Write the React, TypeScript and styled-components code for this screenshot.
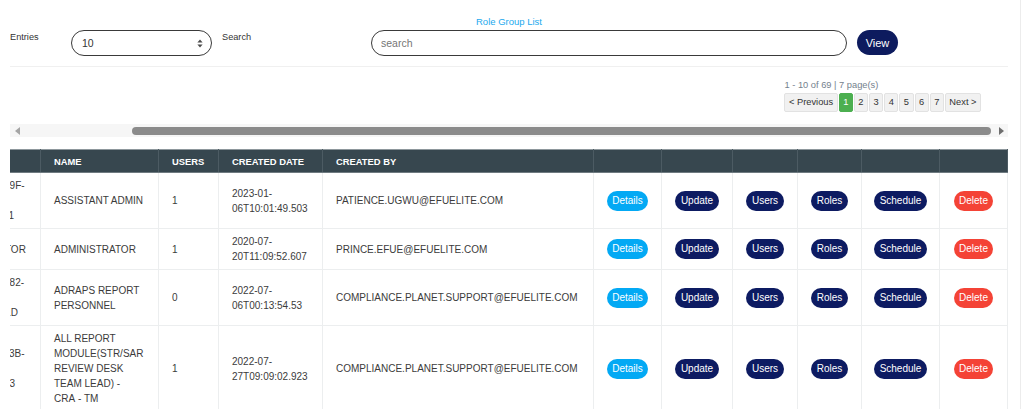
import { useLayoutEffect, useRef, useState } from "react";
import styled, { createGlobalStyle, css } from "styled-components";

type Tone = "info" | "primary" | "danger";

const groups = [
  {
    sn: 1,
    id: "4D7A2C1E-B29F-C4E1-A7D3-E8452B6A3901",
    name: "ASSISTANT ADMIN",
    users: 1,
    created: "2023-01-06T10:01:49.503",
    by: "PATIENCE.UGWU@EFUELITE.COM",
  },
  {
    sn: 2,
    id: "ADMINISTRATOR",
    name: "ADMINISTRATOR",
    users: 1,
    created: "2020-07-20T11:09:52.607",
    by: "PRINCE.EFUE@EFUELITE.COM",
  },
  {
    sn: 3,
    id: "A3C9E5B7-D482-F1A6-E3B8-C7D2A9845E1D",
    name: "ADRAPS REPORT PERSONNEL",
    users: 0,
    created: "2022-07-06T00:13:54.53",
    by: "COMPLIANCE.PLANET.SUPPORT@EFUELITE.COM",
  },
  {
    sn: 4,
    id: "E6F1A2C4-C73B-D9E0-A5F2-B1C8045E6F73",
    name: "ALL REPORT MODULE(STR/SAR REVIEW DESK TEAM LEAD) - CRA\u00a0-\u00a0TM",
    users: 1,
    created: "2022-07-27T09:09:02.923",
    by: "COMPLIANCE.PLANET.SUPPORT@EFUELITE.COM",
  },
];

const actions: { label: string; tone: Tone }[] = [
  { label: "Details", tone: "info" },
  { label: "Update", tone: "primary" },
  { label: "Users", tone: "primary" },
  { label: "Roles", tone: "primary" },
  { label: "Schedule", tone: "primary" },
  { label: "Delete", tone: "danger" },
];

const colWidths = [46, 110, 118, 60, 104, 271, 68, 71, 65, 64, 78, 68];

const App = () => {
  const wrapRef = useRef<HTMLDivElement>(null);
  const [bar, setBar] = useState({ left: 0, width: 100 });

  useLayoutEffect(() => {
    const el = wrapRef.current;
    if (!el) return;
    const max = el.scrollWidth - el.clientWidth;
    el.scrollLeft = max;
    setBar({
      left: (max / el.scrollWidth) * 100,
      width: (el.clientWidth / el.scrollWidth) * 100,
    });
  }, []);

  return (
    <Page>
      <GlobalStyle />
      <Title>Role Group List</Title>
      <FormRow>
        <FieldLabel $width={61}>Entries</FieldLabel>
        <SelectBox>
          <Select defaultValue="10">
            <option>10</option>
            <option>25</option>
            <option>50</option>
          </Select>
          <SelectIcon width="6" height="9" viewBox="0 0 6 9">
            <path d="M3 0.5L5.6 3.6H0.4Z" fill="#4a4a4a" />
            <path d="M3 8.5L5.6 5.4H0.4Z" fill="#4a4a4a" />
          </SelectIcon>
        </SelectBox>
        <FieldLabel $width={149} $gap={10}>
          Search
        </FieldLabel>
        <SearchInput placeholder="search" />
        <ViewButton>View</ViewButton>
      </FormRow>
      <Divider />

      <Pager>
        <PagerInfo>1 - 10 of 69 | 7 page(s)</PagerInfo>
        <PagerButtons>
          <PageButton>&lt; Previous</PageButton>
          {[1, 2, 3, 4, 5, 6, 7].map((n) => (
            <PageButton key={n} $active={n === 1}>
              {n}
            </PageButton>
          ))}
          <PageButton>Next &gt;</PageButton>
        </PagerButtons>
      </Pager>

      <ScrollBar>
        <ScrollArrow $dir="left" $color="#a5a5a5" />
        <ThumbTrack>
          <Thumb style={{ marginLeft: `${bar.left}%`, width: `${bar.width}%` }} />
        </ThumbTrack>
        <ScrollArrow $dir="right" $color="#6e6e6e" />
      </ScrollBar>

      <TableWrap ref={wrapRef}>
        <Table>
          <colgroup>
            {colWidths.map((w, i) => (
              <col key={i} style={{ width: w }} />
            ))}
          </colgroup>
          <thead>
            <tr>
              <Th>#</Th>
              <Th>ID</Th>
              <Th>NAME</Th>
              <Th>USERS</Th>
              <Th>CREATED DATE</Th>
              <Th>CREATED BY</Th>
              {actions.map((a) => (
                <Th key={a.label} />
              ))}
            </tr>
          </thead>
          <tbody>
            {groups.map((g) => (
              <tr key={g.sn}>
                <Td>{g.sn}</Td>
                <Td>{g.id}</Td>
                <Td>{g.name}</Td>
                <Td>{g.users}</Td>
                <Td>{g.created}</Td>
                <Td>{g.by}</Td>
                {actions.map((a) => (
                  <ActionTd key={a.label}>
                    <ActionButton $tone={a.tone}>{a.label}</ActionButton>
                  </ActionTd>
                ))}
              </tr>
            ))}
          </tbody>
        </Table>
      </TableWrap>
    </Page>
  );
};

export default App;

// styles
const GlobalStyle = createGlobalStyle`
  html, body {
    margin: 0;
    padding: 0;
    overflow: hidden;
    background: #fff;
  }
  body {
    font-family: "Liberation Sans", Arial, sans-serif;
    color: #333;
  }
  * {
    box-sizing: border-box;
  }
`;

const Page = styled.div`
  width: 1021px;
  min-height: 100vh;
  padding: 14px 12px 0 10px;
  border-right: 1px solid #ececec;
  display: flex;
  flex-direction: column;
`;

const Title = styled.div`
  text-align: center;
  font-size: 9.5px;
  line-height: 16px;
  color: #22a9ee;
`;

const FormRow = styled.div`
  display: flex;
  align-items: flex-start;
  height: 26px;
`;

const FieldLabel = styled.label<{ $width: number; $gap?: number }>`
  width: ${(p) => p.$width}px;
  margin-left: ${(p) => p.$gap ?? 0}px;
  padding-top: 1px;
  font-size: 9.2px;
  line-height: 12px;
  color: #333;
`;

const SelectBox = styled.div`
  position: relative;
  width: 141px;
  height: 26px;
`;

const Select = styled.select`
  appearance: none;
  width: 100%;
  height: 100%;
  padding: 0 10px;
  border: 1px solid #3a3a3a;
  border-radius: 13px;
  background: #fff;
  font-family: "Liberation Sans", Arial, sans-serif;
  font-size: 10.5px;
  color: #333;
  outline: none;
`;

const SelectIcon = styled.svg`
  position: absolute;
  right: 9px;
  top: 9px;
  pointer-events: none;
`;

const SearchInput = styled.input`
  width: 476px;
  height: 26px;
  padding: 0 9px;
  border: 1px solid #3a3a3a;
  border-radius: 13px;
  font-family: "Liberation Sans", Arial, sans-serif;
  font-size: 10.5px;
  color: #333;
  outline: none;
  ::placeholder {
    color: #c3c3c3;
  }
`;

const ViewButton = styled.button`
  margin-left: 10px;
  width: 41px;
  height: 25px;
  border: none;
  border-radius: 13px;
  background: #0d1b5e;
  color: #fff;
  font-family: "Liberation Sans", Arial, sans-serif;
  font-size: 11px;
  padding: 0;
`;

const Divider = styled.div`
  margin-top: 10px;
  height: 1px;
  background: #f0f0f0;
`;

const Pager = styled.div`
  align-self: flex-end;
  margin: 12px 27px 0 0;
  display: flex;
  flex-direction: column;
  gap: 1px;
`;

const PagerInfo = styled.div`
  font-size: 9.3px;
  line-height: 13px;
  color: #74818d;
`;

const PagerButtons = styled.div`
  display: flex;
  gap: 1px;
`;

const PageButton = styled.button<{ $active?: boolean }>`
  height: 19px;
  padding: 0 3.5px;
  border: 1px solid #e2e2e2;
  border-radius: 2px;
  background: #f1f1f1;
  color: #333;
  font-family: "Liberation Sans", Arial, sans-serif;
  font-size: 9.3px;
  line-height: 17px;
  ${(p) =>
    p.$active &&
    css`
      background: #4caf50;
      border-color: #4caf50;
      color: #fff;
    `}
`;

const ScrollBar = styled.div`
  margin-top: 12px;
  height: 13px;
  display: flex;
  align-items: center;
  background: #f6f6f6;
`;

const ScrollArrow = styled.div<{ $dir: "left" | "right"; $color: string }>`
  width: 14px;
  height: 13px;
  display: flex;
  align-items: center;
  justify-content: center;
  &::before {
    content: "";
    width: 0;
    height: 0;
    border-top: 4px solid transparent;
    border-bottom: 4px solid transparent;
    ${(p) =>
      p.$dir === "left"
        ? css`
            border-right: 5px solid ${p.$color};
          `
        : css`
            border-left: 5px solid ${p.$color};
          `}
  }
`;

const ThumbTrack = styled.div`
  flex: 1;
  display: flex;
  align-items: center;
  padding-right: 3px;
`;

const Thumb = styled.div`
  height: 8px;
  border-radius: 4px;
  background: #8b8b8b;
`;

const TableWrap = styled.div`
  margin-top: 12px;
  overflow: hidden;
`;

const Table = styled.table`
  width: 1123px;
  table-layout: fixed;
  border-collapse: collapse;
  font-family: "Liberation Sans", Arial, sans-serif;
`;

const Th = styled.th`
  background: #37474f;
  color: #fff;
  font-size: 9.4px;
  font-weight: 700;
  text-align: left;
  line-height: 15px;
  padding: 4px 13px 3px;
  border: 1px solid #4c5b63;
  border-top: 1px solid #8d979c;
  border-bottom: 1px solid #6f7b81;
`;

const Td = styled.td`
  padding: 5px 13px;
  font-size: 10px;
  line-height: 15px;
  color: #3b3b3b;
  vertical-align: middle;
  border: 1px solid #eceeef;
`;

const ActionTd = styled(Td)`
  padding: 5px 0;
  text-align: center;
`;

const toneColors: Record<Tone, string> = {
  info: "#03a9f4",
  primary: "#0d1b62",
  danger: "#f44336",
};

const ActionButton = styled.button<{ $tone: Tone }>`
  height: 20px;
  padding: 0 5.5px;
  border: none;
  border-radius: 10px;
  background: ${(p) => toneColors[p.$tone]};
  color: #fff;
  font-family: "Liberation Sans", Arial, sans-serif;
  font-size: 10px;
  line-height: 20px;
`;
